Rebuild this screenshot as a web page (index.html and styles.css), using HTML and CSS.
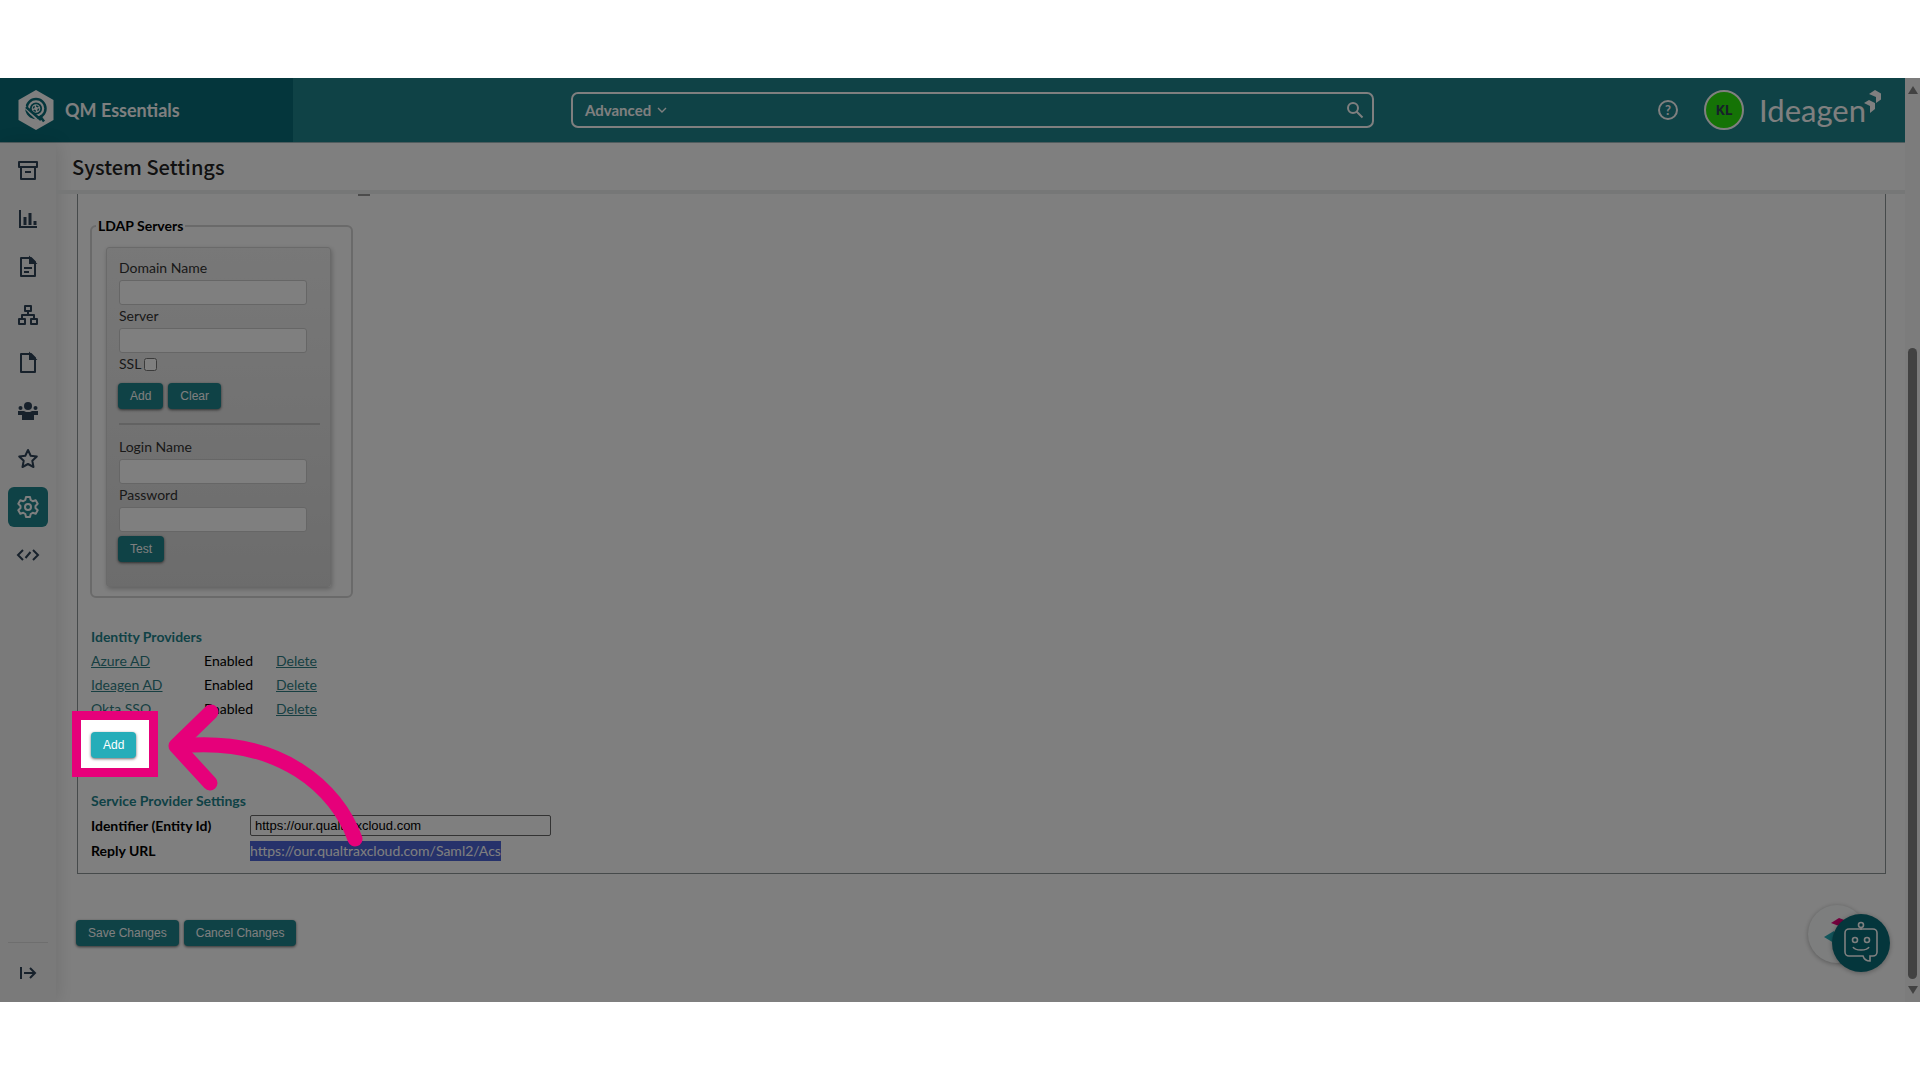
FILE: index.html
```html
<!DOCTYPE html>
<html lang="en">
<head>
    <meta charset="UTF-8">
    <meta name="viewport" content="width=device-width, initial-scale=1.0">
    <title>System Settings - QM Essentials</title>
    <link rel="stylesheet" href="styles.css">
</head>
<body>
    <div class="window">
        <div class="app">
            <header class="header">
                <a class="brand" href="#">
                    <svg width="36" height="40" viewBox="0 0 36 40">
                        <path d="M18 0l17.500 10v20L18 40 .5 30V10z" fill="#fff"/>
                        <circle cx="18" cy="18.500" r="9.500" fill="none" stroke="#086c78" stroke-width="2.500"/>
                        <circle cx="18" cy="18.500" r="5.200" fill="none" stroke="#086c78" stroke-width="1.800"/>
                        <circle cx="18" cy="18.500" r="2.600" fill="none" stroke="#086c78" stroke-width="1.500" stroke-dasharray="2.500 1.500"/>
                        <path d="M6 16l13 13" stroke="#fff" stroke-width="3"/>
                        <path d="M8 17l15 13M22 26l4 5.500" stroke="#086c78" stroke-width="2.500"/>
                    </svg>
                    <span>QM Essentials</span>
                </a>
                <form class="search">
                    <button type="button" class="search-mode">Advanced
                        <svg width="10" height="10" viewBox="0 0 10 10"><path d="M1 3l4 4 4-4" fill="none" stroke="#fff" stroke-width="1.400"/></svg>
                    </button>
                    <input type="text" class="search-input" aria-label="Search">
                    <button type="submit" class="search-go" aria-label="Search">
                        <svg width="18" height="18" viewBox="0 0 18 18" fill="none" stroke="#fff" stroke-width="2"><circle cx="7" cy="7" r="5"/><path d="M10.500 10.500l6 6"/></svg>
                    </button>
                </form>
                <div class="header-right">
                    <a class="help" href="#" aria-label="Help">?</a>
                    <span class="avatar">KL</span>
                    <span class="logo">Ideagen<svg class="logo-mark" width="18" height="24" viewBox="0 0 18 24" fill="#fff">
                        <path d="M5 4l6-4 6 3.500v6L12 13V7z"/>
                        <path d="M0 13l5-3 6 3v6l-5 4v-7z"/>
                    </svg></span>
                </div>
            </header>

            <div class="body">
                <nav class="sidebar">
                    <a href="#" aria-label="Archive"><svg viewBox="0 0 24 24"><path d="M3 3h18v5H3zM5 8v12h14V8M9 13h6" stroke-linejoin="round"/></svg></a>
                    <a href="#" aria-label="Reports"><svg viewBox="0 0 24 24"><path d="M4 3v17h17"/><path d="M9 10v8M14 6v12M19 14v4" stroke-width="3"/></svg></a>
                    <a href="#" aria-label="Documents"><svg viewBox="0 0 24 24"><path d="M5 3h10l4 4v14H5zM8 13h8M8 17h5" stroke-linejoin="round"/><path d="M14 3v5h5z" fill="currentColor"/></svg></a>
                    <a href="#" aria-label="Workflows"><svg viewBox="0 0 24 24"><path d="M9 3h6v5H9zM3 16h6v5H3zM15 16h6v5h-6zM12 8v4M6 16v-4h12v4" stroke-linejoin="round"/></svg></a>
                    <a href="#" aria-label="Files"><svg viewBox="0 0 24 24"><path d="M5 3h10l4 4v14H5z" stroke-linejoin="round"/><path d="M14 3v5h5z" fill="currentColor"/></svg></a>
                    <a href="#" aria-label="Groups"><svg viewBox="0 0 24 24" class="solid"><circle cx="12" cy="7" r="4"/><circle cx="4.500" cy="9" r="2"/><circle cx="19.500" cy="9" r="2"/><path d="M2 12h6l2 1h4l2-1h6v4h-4v5H6v-5H2z"/></svg></a>
                    <a href="#" aria-label="Favourites"><svg viewBox="0 0 24 24"><path d="M12 3l2.700 5.700 6.100.8-4.500 4.300 1.200 6.200-5.500-3-5.500 3 1.200-6.200-4.500-4.300 6.100-.8z" stroke-linejoin="round"/></svg></a>
                    <a href="#" class="active" aria-label="Settings"><svg viewBox="0 0 24 24"><circle cx="12" cy="12" r="3"/><path d="M10 2h4l.7 3 2 1.200 3-.9 2 3.500L19.500 11v2l2.200 2.200-2 3.500-3-.9-2 1.200-.7 3h-4l-.7-3-2-1.200-3 .9-2-3.500L4.500 13v-2L2.300 8.800l2-3.500 3 .9 2-1.200z" stroke-linejoin="round"/></svg></a>
                    <a href="#" aria-label="Developer"><svg viewBox="0 0 24 24"><path d="M7 7l-5 5 5 5M17 7l5 5-5 5M14.500 9l-5 6"/></svg></a>
                    <a href="#" class="expand" aria-label="Expand menu"><svg viewBox="0 0 24 24"><path d="M5 6v12M8 12h11M14 7l5 5-5 5"/></svg></a>
                </nav>

                <main class="main">
                    <h1 class="title">System Settings</h1>

                    <div class="content">
                        <section class="panel">
                            <div class="scrolled-box"></div>
                            <fieldset class="ldap">
                                <legend>LDAP Servers</legend>
                                <div class="ldap-box">
                                    <label for="domain">Domain Name</label>
                                    <input type="text" id="domain">
                                    <label for="server">Server</label>
                                    <input type="text" id="server">
                                    <div class="ssl">
                                        <label for="ssl">SSL</label>
                                        <input type="checkbox" id="ssl">
                                    </div>
                                    <div class="buttons">
                                        <button type="button" class="btn">Add</button>
                                        <button type="button" class="btn">Clear</button>
                                    </div>
                                    <hr>
                                    <label for="login">Login Name</label>
                                    <input type="text" id="login">
                                    <label for="password">Password</label>
                                    <input type="password" id="password">
                                    <div class="buttons test">
                                        <button type="button" class="btn">Test</button>
                                    </div>
                                </div>
                            </fieldset>

                            <h2>Identity Providers</h2>
                            <table class="providers">
                                <tr><td><a href="#">Azure AD</a></td><td>Enabled</td><td><a href="#">Delete</a></td></tr>
                                <tr><td><a href="#">Ideagen AD</a></td><td>Enabled</td><td><a href="#">Delete</a></td></tr>
                                <tr><td><a href="#">Okta SSO</a></td><td>Enabled</td><td><a href="#">Delete</a></td></tr>
                            </table>
                            <div class="add-provider">
                                <button type="button" class="btn btn-hover">Add</button>
                                <!-- guide highlight, dims everything around the button -->
                                <div class="spotlight"></div>
                                <svg class="arrow" width="210" height="160" viewBox="160 700 210 160" fill="none" stroke="#e6007a" stroke-width="15" stroke-linecap="round" stroke-linejoin="round">
                                    <path d="M356 838C338 788 282 735 180 745"/>
                                    <path d="M212 711L177 745l34 37"/>
                                </svg>
                            </div>

                            <h2>Service Provider Settings</h2>
                            <div class="setting">
                                <label for="entity">Identifier (Entity Id)</label>
                                <input type="text" id="entity" value="https://our.qualtraxcloud.com">
                            </div>
                            <div class="setting">
                                <b>Reply URL</b>
                                <span class="selected">https://our.qualtraxcloud.com/Saml2/Acs</span>
                            </div>
                        </section>

                        <div class="buttons save">
                            <button type="button" class="btn">Save Changes</button>
                            <button type="button" class="btn">Cancel Changes</button>
                        </div>
                    </div>
                </main>
            </div>
        </div>

        <div class="scrollbar">
            <svg width="10" height="8" viewBox="0 0 10 8"><path d="M5 0l5 8H0z" fill="#858585"/></svg>
            <div class="track"><div class="thumb"></div></div>
            <svg width="10" height="8" viewBox="0 0 10 8"><path d="M5 8L0 0h10z" fill="#858585"/></svg>
        </div>

        <div class="chat">
            <div class="chat-back">
                <svg width="58" height="58" viewBox="0 0 58 58"><path d="M23 18l8-5 8 3v8z" fill="#e6007a"/><path d="M16 32l10-6v12z" fill="#25adb9"/></svg>
            </div>
            <button type="button" class="chat-bot" aria-label="Open assistant">
                <svg width="36" height="42" viewBox="0 0 36 42" fill="none" stroke="#fff" stroke-width="1.600">
                    <circle cx="18" cy="4" r="2.500"/>
                    <path d="M18 7v2M6 8h24a4 4 0 0 1 4 4v19a4 4 0 0 1-4 4h-3v5c-4 0-6-2-7-5H6a4 4 0 0 1-4-4V12a4 4 0 0 1 4-4z"/>
                    <circle cx="12" cy="19" r="2.500"/><circle cx="24" cy="19" r="2.500"/>
                    <path d="M10 26c2 4 14 4 16 0"/>
                </svg>
            </button>
        </div>
    </div>
</body>
</html>
```
FILE: styles.css
```css
* {
    box-sizing: border-box;
}

body {
    margin: 0;
    padding: 78px 0;
    min-height: 100vh;
    display: flex;
    background-color: #fff;
    color: #000;
    font-family: Lato, sans-serif;
    font-size: 14px;
    line-height: 24px;
}

button, input {
    font-family: inherit;
    font-size: inherit;
    margin: 0;
}

.window {
    position: relative;
    display: flex;
    flex: 1;
    overflow: hidden;
}

.app {
    flex: 1;
    display: flex;
    flex-direction: column;
}

/* header */
.header {
    display: grid;
    grid-template-columns: 293px 278fr 803fr 531fr;
    height: 65px;
    align-items: center;
    background-color: #1e848c;
    border-bottom: 1px solid #9fb9bc;
}

.brand {
    display: flex;
    align-items: center;
    gap: 11px;
    height: 64px;
    padding-left: 18px;
    background-color: #086c78;
    color: #fff;
    font-size: 18px;
    font-weight: bold;
    text-decoration: none;
}

.search {
    grid-column: 3;
    display: flex;
    align-items: center;
    height: 36px;
    padding: 0 8px 0 12px;
    border: 2px solid #fff;
    border-radius: 7px;
}

.search button {
    display: flex;
    align-items: center;
    gap: 6px;
    padding: 0;
    border: 0;
    background: none;
    color: #fff;
    font-size: 15px;
    font-weight: bold;
}

.search-input {
    flex: 1;
    border: 0;
    background: none;
    color: #fff;
}

.header-right {
    display: flex;
    align-items: center;
    justify-content: flex-end;
    padding-right: 23px;
}

.help {
    width: 20px;
    height: 20px;
    border: 2px solid #fff;
    border-radius: 50%;
    color: #fff;
    font-size: 13px;
    font-weight: bold;
    line-height: 16px;
    text-align: center;
    text-decoration: none;
}

.avatar {
    width: 40px;
    height: 40px;
    margin: 0 15px 0 26px;
    border: 2px solid #fff;
    border-radius: 50%;
    background-color: #2ae60c;
    color: #2e4257;
    font-family: "Noto Sans", sans-serif;
    font-weight: bold;
    line-height: 36px;
    text-align: center;
}

.logo {
    display: flex;
    color: #fff;
    font-size: 31px;
    line-height: 52px;
}

.logo-mark {
    margin: 6px 0 0 -2px;
}

/* sidebar */
.body {
    flex: 1;
    display: flex;
}

.sidebar {
    display: flex;
    flex-direction: column;
    gap: 8px;
    width: 56px;
    padding: 8px 8px 0;
    background-color: #f5f5f5;
    box-shadow: 2px 0 18px rgba(0, 0, 0, 0.12);
}

.sidebar a {
    display: flex;
    align-items: center;
    justify-content: center;
    height: 40px;
    border-radius: 6px;
    color: #2e4257;
}

.sidebar svg {
    width: 24px;
    height: 24px;
    fill: none;
    stroke: currentColor;
    stroke-width: 2;
}

.sidebar .solid {
    fill: currentColor;
    stroke: none;
}

.sidebar .active {
    background-color: #1e848c;
    color: #fff;
}

.sidebar .expand {
    height: 60px;
    margin-top: auto;
    border-top: 1px solid #ddd;
    border-radius: 0;
}

/* page */
.main {
    flex: 1;
}

.title {
    margin: 0;
    padding: 0 16px;
    height: 51px;
    border-bottom: 4px solid #eceeef;
    color: #222;
    font-family: "Noto Sans CJK SC", sans-serif;
    font-size: 20px;
    font-weight: 500;
    line-height: 47px;
}

.content {
    padding: 0 19px 0 21px;
}

.panel {
    padding: 0 13px 10px;
    border: 1px solid #8d9596;
    border-top: 0;
}

.scrolled-box {
    width: 12px;
    height: 2px;
    margin-left: 267px;
    background-color: #999;
}

.ldap {
    width: 263px;
    margin: 20px 0 27px -1px;
    padding: 11px 20px 9px 14px;
    border: 2px solid #d4d4d4;
    border-radius: 6px;
}

.ldap legend {
    margin-left: -10px;
    padding: 0 2px;
    font-weight: bold;
    line-height: 20px;
}

.ldap-box {
    display: flex;
    flex-direction: column;
    padding: 9px 10px 24px 12px;
    border: 1px solid #d4d4d4;
    border-radius: 3px;
    background: linear-gradient(#f0f0f0, #d9d9d9);
    box-shadow: 1px 2px 5px rgba(0, 0, 0, 0.25);
    color: #333;
}

.ldap-box label {
    line-height: 22px;
    padding-bottom: 1px;
}

.ldap-box > input {
    width: 188px;
    height: 25px;
    border: 1px solid #ccc;
    border-radius: 3px;
    background-color: #fff;
}

.ssl {
    display: flex;
    align-items: center;
    gap: 3px;
}

.buttons {
    display: flex;
    gap: 5px;
}

.ldap-box .buttons {
    margin: 7px 0 0 -1px;
}

.ldap-box .test {
    margin-top: 4px;
}

.ldap-box hr {
    width: 100%;
    margin: 14px 0 11px;
    border: 0;
    border-top: 2px solid #c4c4c4;
}

.btn {
    height: 26px;
    padding: 0 12px;
    border: 0;
    border-radius: 4px;
    background-color: #1e848c;
    box-shadow: 0 1px 3px rgba(0, 0, 0, 0.6);
    color: #fff;
    font-family: "Liberation Sans", sans-serif;
    font-size: 12px;
}

.btn-hover {
    background-color: #25adb9;
}

h2 {
    margin: 0;
    color: #1e848c;
    font-size: 14px;
    font-weight: bold;
    line-height: 24px;
}

.providers {
    border-collapse: collapse;
}

.providers td {
    padding: 0;
}

.providers td:first-child {
    width: 113px;
}

.providers td:nth-child(2) {
    width: 72px;
}

.providers a {
    color: #2f7f85;
}

.add-provider {
    position: relative;
    padding-top: 11px;
    margin-bottom: 31px;
    line-height: 0;
}

.spotlight {
    position: absolute;
    z-index: 10;
    top: -10px;
    left: -19px;
    width: 86px;
    height: 66px;
    border: 9px solid #e6007a;
    box-shadow: 0 0 0 3000px rgba(0, 0, 0, 0.5);
}

.arrow {
    position: absolute;
    z-index: 11;
    top: -20px;
    left: 68px;
}

.setting {
    display: flex;
    align-items: center;
    height: 25px;
}

.setting label, .setting b {
    width: 159px;
    font-weight: bold;
}

.setting input {
    width: 301px;
    height: 21px;
    padding: 0 4px;
    border: 1px solid #666;
    border-radius: 2px;
    font-family: "Liberation Sans", sans-serif;
    font-size: 13px;
}

.selected {
    background-color: #4c64d6;
    color: #fff;
    line-height: 20px;
}

.save {
    margin: 46px 0 0 -1px;
}

/* scrollbar */
.scrollbar {
    display: flex;
    flex-direction: column;
    align-items: center;
    width: 15px;
    padding: 8px 0;
    background-color: #f8f8f8;
}

.track {
    flex: 1;
    display: flex;
    align-items: flex-end;
    padding: 2px 0 7px;
}

.thumb {
    width: 9px;
    height: 71.5%;
    border-radius: 5px;
    background-color: #858585;
}

/* chat */
.chat {
    position: absolute;
    right: 30px;
    bottom: 30px;
    width: 82px;
    height: 67px;
}

.chat-back, .chat-bot {
    position: absolute;
    width: 58px;
    height: 58px;
    border-radius: 50%;
    box-shadow: 0 1px 5px rgba(0, 0, 0, 0.3);
}

.chat-back {
    top: 0;
    left: 0;
    background-color: #fafcfc;
}

.chat-bot {
    right: 0;
    bottom: 0;
    padding: 0;
    border: 0;
    background-color: #086c78;
}
```
